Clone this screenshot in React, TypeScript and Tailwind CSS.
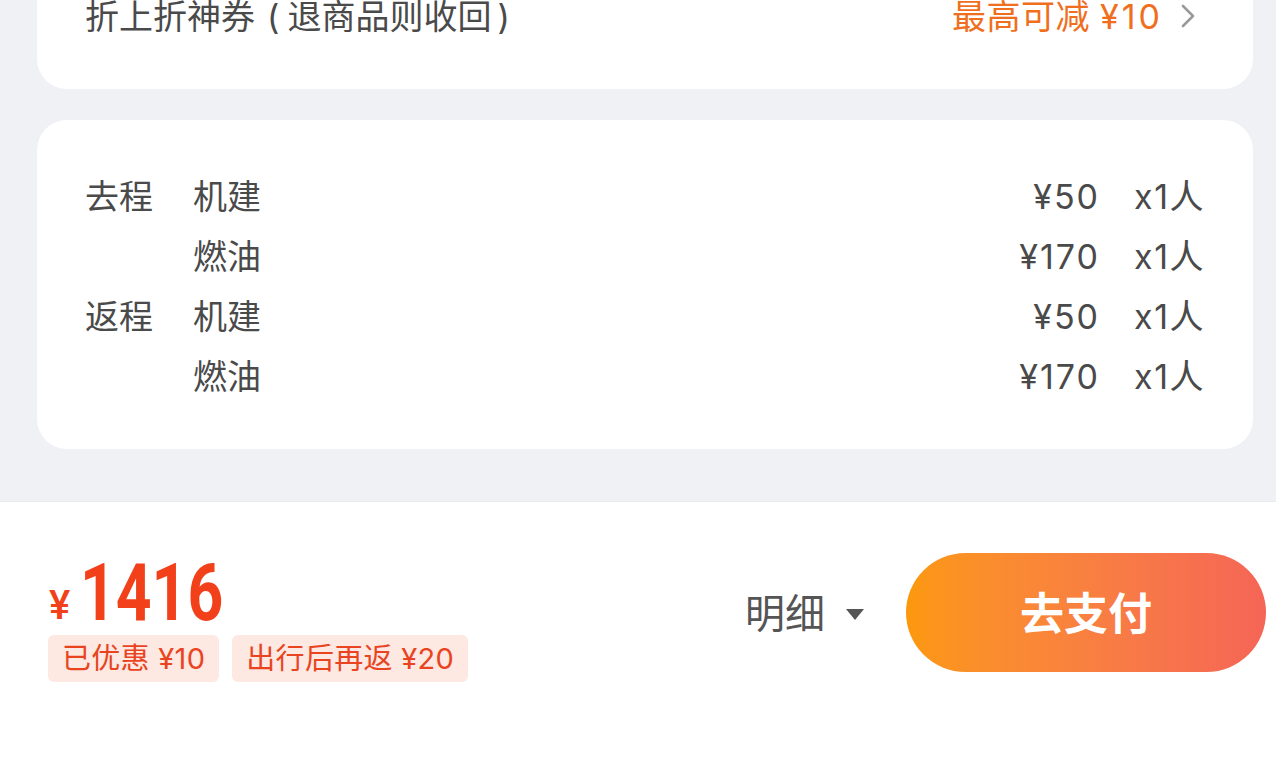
const rows = [
  { trip: "去程", item: "机建", price: "¥50" },
  { trip: "", item: "燃油", price: "¥170" },
  { trip: "返程", item: "机建", price: "¥50" },
  { trip: "", item: "燃油", price: "¥170" },
];

const font = { fontFamily: 'Inter, "Noto Sans CJK SC", "Noto Sans", sans-serif' };

export default function App() {
  return (
    <div className="w-[1276px] h-[783px] overflow-hidden bg-[#f0f1f5] flex flex-col" style={font}>
      {/* coupon card, top is scrolled off */}
      <div className="ml-[37px] mr-[23px] -mt-[44px] bg-white rounded-[30px] pl-12 pr-[58px] pt-[30px] pb-[43px]">
        <div className="h-[60px] flex items-center justify-between text-[34px] text-[#4a4a4a]">
          <span>
            折上折神券<span className="ml-[12px] mr-[8px]">(</span>退商品则收回<span className="ml-[6px]">)</span>
          </span>
          <div className="flex items-center text-[#ef6f1e]">
            <span className="tracking-[0.5px]">最高可减 <span className="tracking-[3px]">¥10</span></span>
            <svg className="ml-[18px]" width="14" height="24" viewBox="0 0 14 24" fill="none">
              <path d="M2 2l10 10-10 10" stroke="#9a9a9a" strokeWidth="2.6" strokeLinecap="round" strokeLinejoin="round" />
            </svg>
          </div>
        </div>
      </div>

      {/* tax & fuel card */}
      <div className="ml-[37px] mr-[23px] mt-[31px] bg-white rounded-[30px] px-12 pt-[46px] pb-[43px]">
        {rows.map((r, i) => (
          <div key={i} className="h-[60px] flex items-center text-[34px] text-[#4a4a4a]">
            <span className="w-[108px]">{r.trip}</span>
            <span className="flex-1">{r.item}</span>
            <span className="text-right tracking-[2px] -mr-[2px]">{r.price}</span>
            <span className="w-[107px] text-right tracking-[1.5px]">x1人</span>
          </div>
        ))}
      </div>

      {/* bottom pay bar */}
      <div className="mt-[52px] flex-1 bg-white border-t border-[#e9eaee] flex items-start justify-between pl-12 pr-[10px] pt-[51px]">
        <div className="flex flex-col">
          <div className="h-[82px] flex items-end pb-[2px] text-[#f2401a]">
            <span className="text-[40px] font-medium leading-none mb-[7px] ml-[1px]" style={{ fontFamily: "Roboto, sans-serif" }}>¥</span>
            <span
              className="text-[80px] font-bold leading-none ml-[10px] origin-left scale-x-[0.78] inline-block"
              style={{ fontFamily: "Roboto, sans-serif" }}
            >
              1416
            </span>
          </div>
          <div className="flex gap-[13px]">
            <span className="h-[47px] px-[14px] flex items-center rounded-[6px] bg-[#fde8e2] text-[#e9441f] text-[29px] tracking-[0.3px]">已优惠 ¥10</span>
            <span className="h-[47px] px-[14px] flex items-center rounded-[6px] bg-[#fde8e2] text-[#e9441f] text-[29px] tracking-[0.3px]">出行后再返 ¥20</span>
          </div>
        </div>

        <div className="flex items-center pt-[3px]">
          <span className="text-[40px] text-[#555]">明细</span>
          <svg className="ml-[20px] mr-[41px]" width="20" height="13" viewBox="0 0 20 13">
            <path d="M1 1h18l-9 11z" fill="#555" />
          </svg>
          <button className="w-[360px] h-[119px] -mt-[3px] rounded-full bg-gradient-to-r from-[#fc980c] to-[#f56556] text-white text-[44px] font-bold pt-[3px]">
            去支付
          </button>
        </div>
      </div>
    </div>
  );
}
